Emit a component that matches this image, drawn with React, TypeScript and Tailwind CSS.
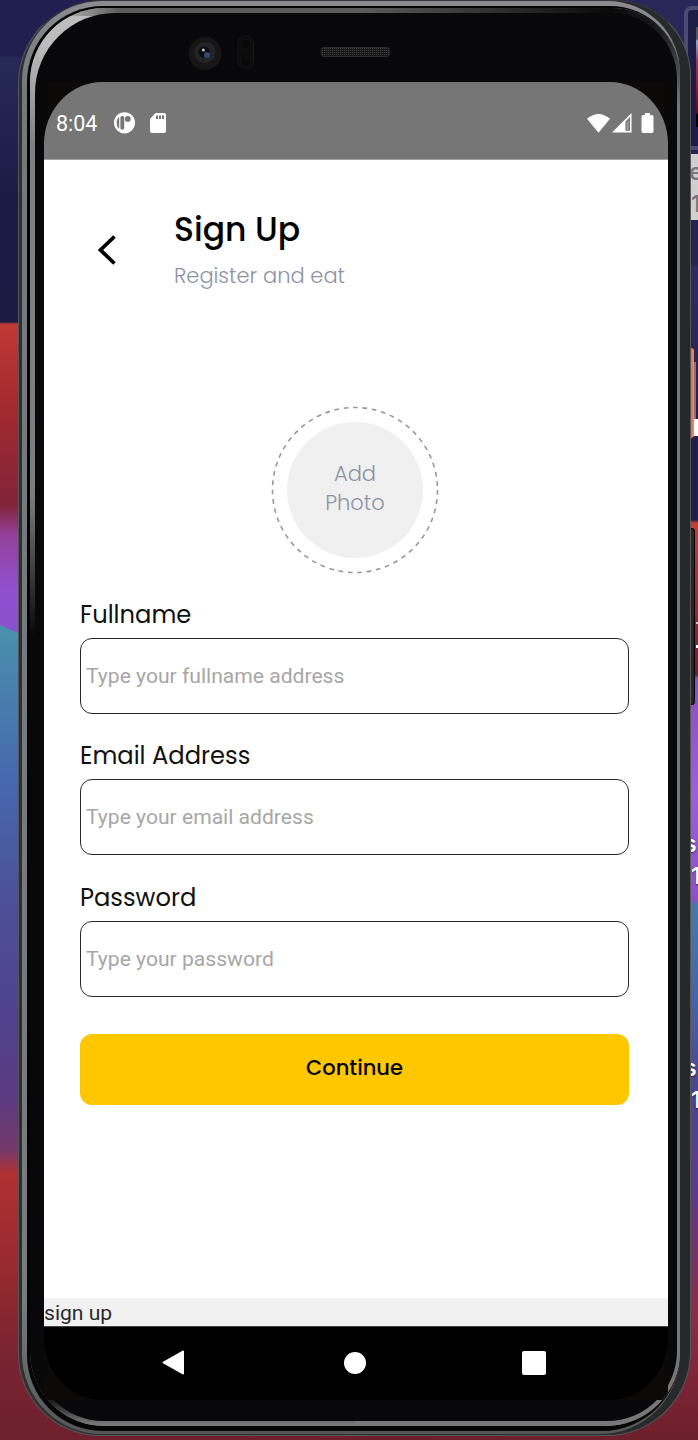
import type { ReactNode } from "react";

const geo = "font-['Poppins','Inter','Liberation_Sans',sans-serif]";

function Wallpaper() {
  return (
    <div aria-hidden="true" className="absolute inset-0 flex">
      <div className="h-full w-1/2 bg-[linear-gradient(180deg,#211f50_0px,#211f50_56px,#272956_58px,#1c1b46_200px,#1c1b44_322px,#c03835_324px,#a52b2e_400px,#812338_505px,#93409a_535px,#9050cf_590px,#8b50cc_628px,#4a8fac_632px,#4668ad_780px,#4c5098_900px,#50418c_1020px,#5c3b80_1100px,#74386a_1150px,#b03132_1174px,#93292f_1280px,#772431_1360px,#6e202d_1440px)]">
        <svg className="mt-[618px]" width="20" height="20" viewBox="0 0 20 20">
          <path d="M0 0H20V16L0 7Z" fill="#8b50cc" />
          <path d="M0 7L20 16V20H0Z" fill="#4a8fac" />
        </svg>
      </div>
      <div className="h-full w-1/2 bg-[linear-gradient(180deg,#27275a_0px,#242450_264px,#2d2c62_268px,#201f4a_440px,#201f4a_520px,#c83c36_523px,#8f2930_620px,#6b1f38_675px,#8750bb_678px,#9a5fdc_790px,#8b50c8_900px,#4679a8_905px,#4763a8_1000px,#4a4590_1090px,#5b3a8c_1190px,#8b2d48_1310px,#7c2434_1380px,#6d1f2b_1440px)]" />
    </div>
  );
}

function DesktopItems() {
  const label = "font-['Inter','Liberation_Sans',sans-serif] text-[23px] leading-[32px] font-semibold";
  return (
    <div aria-hidden="true" className="absolute inset-y-0 right-0 flex w-[14px] flex-col overflow-hidden">
      <div className="mt-[6px] h-[144px] w-[30px] shrink-0 rounded-[8px] border-4 border-[#4b4a72] bg-[#1c1c46] pl-[8px] pt-[17px]">
        <div className="h-[100px] w-[4px] bg-[linear-gradient(180deg,#555_0px,#555_12px,#99a5c8_14px,#8b3b55_34px,#8b1d30_60px,#5b0c14_86px,#000_88px)]" />
      </div>
      <div className={`${label} mt-[4px] h-[66px] shrink-0 bg-[#cfcfcf] pt-[2px] pl-[5px] text-[#77777b]`}>
        <div>e</div>
        <div className="pl-[2px]">1</div>
      </div>
      <div className="mt-[142px] ml-[10px] h-[57px] w-[2px] shrink-0 bg-[#8c706e]" />
      <div className="ml-[10px] h-[17px] w-[4px] shrink-0 bg-white" />
      <div className="mt-[186px] ml-[12px] h-[2px] w-[2px] shrink-0 bg-[#ccc]" />
      <div className="mt-[21px] ml-[12px] h-[3px] w-[2px] shrink-0 bg-white" />
      <div className={`${label} mt-[180px] text-white [text-shadow:0_1px_2px_#0009]`}>
        <div>s</div>
        <div className="pl-[7px]">1</div>
      </div>
      <div className={`${label} mt-[160px] text-white [text-shadow:0_1px_2px_#0009]`}>
        <div>s</div>
        <div className="pl-[7px]">1</div>
      </div>
    </div>
  );
}

function Frame({ children }: { children: ReactNode }) {
  return (
    <div className="relative h-[1436px] w-[673px]">
      <div className="absolute left-[671px] top-[348px] h-[90px] w-[5px] rounded-r-[3px] bg-[linear-gradient(90deg,#cb5a3e,#f08a6c)]" />
      <div className="absolute left-[671px] top-[528px] h-[177px] w-[6px] rounded-r-[3px] border border-black bg-[#242626]" />
      <div className="relative h-full w-full rounded-[84px_76px_84px_82px] border border-[#55575a] border-t-[#38383a] bg-[linear-gradient(90deg,#2e3030,#303232_50%,#262829)] pb-px pl-[3px] pr-[10px]">
        <div className="h-full w-full rounded-[80px_72px_80px_80px] bg-[linear-gradient(180deg,#8b8b91_0px,#74777b_90px,#777b7e_1300px,#555_1434px)] pb-[3px] pl-[5px] pt-[5px]">
          <div className="h-full w-full rounded-[76px_70px_78px_76px] bg-[#050506] pb-[5px] pl-[3px] pt-[2px]">
            <div className="grid h-full w-full overflow-hidden rounded-[74px_68px_74px_74px] bg-[#777]">
              <div className="col-start-1 row-start-1 flex flex-col">
                <div className="h-[8px] bg-[linear-gradient(90deg,#bbb_0px,#999_50px,#5c5c5c_90px,#5c5c5c_330px,#0a0a0a_580px,#222_645px)]" />
                <div className="flex grow">
                  <div className="w-1/2 bg-[linear-gradient(180deg,#bdbdbd_0px,#bdbdbd_26px,#aaa_60px,#808080_130px,#7c7c7c_480px,#080808_620px,#080808_1380px,#777_1408px)]" />
                  <div className="w-1/2 bg-[linear-gradient(180deg,#111_0px,#222_20px,#777_90px,#777_1410px)]" />
                </div>
              </div>
              <div className="col-start-1 row-start-1 pb-[5px] pl-[5px] pr-[3px] pt-[5px]">
                <div className="h-full w-full rounded-[80px_66px_70px_68px] bg-[#08080a] pl-[9px] pr-[9px]">
                  {children}
                </div>
              </div>
            </div>
          </div>
        </div>
      </div>
    </div>
  );
}

function Sensors() {
  return (
    <svg aria-hidden="true" className="block" width="624" height="69" viewBox="44 13 624 69">
      <defs>
        <pattern id="mesh" width="2" height="2" patternUnits="userSpaceOnUse">
          <rect width="2" height="2" fill="#171717" />
          <rect width="1" height="1" fill="#414141" />
        </pattern>
        <radialGradient id="lens">
          <stop offset="0" stopColor="#15161c" />
          <stop offset=".55" stopColor="#20222a" />
          <stop offset="1" stopColor="#252526" />
        </radialGradient>
      </defs>
      <circle cx="205" cy="53.500" r="16.500" fill="#161616" />
      <circle cx="205" cy="52.500" r="10.500" fill="url(#lens)" />
      <circle cx="204" cy="52" r="5.500" fill="#0b0b10" />
      <circle cx="207" cy="55" r="3" fill="#344770" />
      <circle cx="203.300" cy="50" r="1.500" fill="#c4c4c8" />
      <rect x="238" y="36" width="15.500" height="33" rx="7.700" fill="#0c0c0c" stroke="#171717" />
      <circle cx="245.700" cy="44" r="5" fill="#080808" stroke="#141414" />
      <circle cx="245.700" cy="61.500" r="5" fill="#080808" stroke="#141414" />
      <rect x="321" y="47.500" width="68.500" height="9" rx="3" fill="url(#mesh)" stroke="#2c2c2c" />
    </svg>
  );
}

function StatusBar() {
  return (
    <div className="flex h-[78px] shrink-0 items-center border-b border-[#a0a0a0] bg-[#767676] pl-[12px] pr-[14px] pt-[5px] text-white">
      <span className="w-[58px] pt-px font-['Roboto',sans-serif] text-[21.500px] leading-6">8:04</span>
      <svg width="21" height="22" viewBox="0 0 21 22">
        <circle cx="10.500" cy="10.800" r="10.600" fill="#fff" />
        <path d="M4.500 5.200Q5.200 4.500 5.200 6V15.800Q5.200 17 4.500 16.400Q2.600 14.200 2.600 10.800Q2.600 7.400 4.500 5.200Z" fill="#767676" />
        <rect x="6.400" y="4" width="3.800" height="13.500" rx="1.500" fill="#767676" />
        <circle cx="13.800" cy="6.900" r="2.900" fill="#767676" />
      </svg>
      <svg className="ml-[15px]" width="16" height="20" viewBox="0 0 16 20">
        <path d="M5.500 0H14Q16 0 16 2V18Q16 20 14 20H2Q0 20 0 18V6Z" fill="#fff" />
        <path d="M6 2.500H8V6H6ZM9 2.500H11V6H9ZM12 2.500H14V6H12Z" fill="#767676" />
      </svg>
      <span className="grow" />
      <svg width="23" height="19" viewBox="0 0 23 19">
        <path d="M0 4.800Q11.500 -4.600 23 4.800L11.500 18.800Z" fill="#fff" />
      </svg>
      <svg className="ml-[2px]" width="20" height="20" viewBox="0 0 20 20">
        <path d="M0 19.500L19.500 0V19.500Z" fill="#fff" />
        <path d="M13.500 8.500L18 4V17.800H13.500Z" fill="#767676" />
        <path d="M14.800 9.500L16.800 7.500V16.800H14.800Z" fill="#999" />
      </svg>
      <svg className="ml-[9px]" width="13" height="20" viewBox="0 0 13 20">
        <path d="M4 0H9V2H11Q12.500 2 12.500 4V18Q12.500 20 11 20H2Q.5 20 .5 18V4Q.5 2 2 2H4Z" fill="#fff" />
      </svg>
    </div>
  );
}

function Field({ label, placeholder }: { label: string; placeholder: string }) {
  return (
    <label className="flex h-[141.300px] flex-col">
      <span className={`${geo} flex h-[43px] shrink-0 items-center pb-[3px] text-[24.200px] leading-8 whitespace-nowrap text-[#111]`}>{label}</span>
      <input
        placeholder={placeholder}
        className="h-[76px] w-full rounded-[12px] border-[1.500px] border-[#29292b] bg-white px-[5px] pb-px font-['Roboto',sans-serif] text-[21.100px] outline-none placeholder:text-[#a6a6a6] placeholder:opacity-100"
      />
    </label>
  );
}

function NavBar() {
  return (
    <div className="flex h-[74px] shrink-0 items-start border-t border-[#444] bg-black pl-[118px] pt-[23px]">
      <svg width="23" height="25" viewBox="0 0 23 25">
        <path d="M1.500 12.500L21 1.500V23.500Z" fill="#fff" stroke="#fff" strokeWidth="2" strokeLinejoin="round" />
      </svg>
      <span className="ml-[159px] mt-[2px] size-[22px] rounded-full bg-white" />
      <span className="ml-[156px] mt-px size-[24px] rounded-[2px] bg-white" />
    </div>
  );
}

function SignUpScreen() {
  return (
    <div className="h-[1318px] w-[624px] bg-[#0b0a08]">
      <div className="flex h-full w-full flex-col overflow-hidden rounded-[58px/62px]">
        <StatusBar />
        <main className="h-[1138px] shrink-0 bg-white pl-[36px] pr-[39px]">
          <header className="flex h-[178px] pt-[47px]">
            <button className="mt-[26px] ml-[17px] h-[34px] w-[20px]" aria-label="Back">
              <svg width="20" height="34" viewBox="0 0 20 34">
                <path d="M17.500 3.500L3.500 17L17.500 30.500" fill="none" stroke="#000" strokeWidth="3.800" />
              </svg>
            </button>
            <div className={`${geo} ml-[57px]`}>
              <h1 className="text-[33px] leading-[46px] font-medium whitespace-nowrap text-black">Sign Up</h1>
              <p className="mt-[6px] text-[21px] leading-[34px] font-light whitespace-nowrap text-[#8d92a3]">Register and eat</p>
            </div>
          </header>
          <div className="mt-[68px] ml-[191px] grid size-[168px] place-items-center">
            <svg className="col-start-1 row-start-1" width="168" height="168" viewBox="0 0 168 168">
              <circle cx="84" cy="84" r="82.500" fill="none" stroke="#9297a8" strokeWidth="1.600" strokeDasharray="4.710 4.710" />
            </svg>
            <button className={`${geo} col-start-1 row-start-1 size-[136px] rounded-full bg-[#f0f0f0] pb-[4px] text-[21px] leading-[29px] font-light text-[#8d92a3]`}>
              Add
              <br />
              Photo
            </button>
          </div>
          <form className="mt-[21px]">
            <Field label="Fullname" placeholder="Type your fullname address" />
            <Field label="Email Address" placeholder="Type your email address" />
            <Field label="Password" placeholder="Type your password" />
            <button
              type="button"
              className={`${geo} mt-[15px] h-[71px] w-full rounded-[12px] bg-[#ffc700] pb-[3px] text-[21px] font-medium text-[#050505]`}
            >
              Continue
            </button>
          </form>
        </main>
        <div className="flex h-[28px] shrink-0 items-center bg-[#f1f1f1] pt-px font-['Roboto',sans-serif] text-[21.100px] leading-6 text-[#2b2b2b]">sign up</div>
        <NavBar />
      </div>
    </div>
  );
}

export default function App() {
  return (
    <div className="relative h-[1440px] w-[698px] overflow-hidden bg-[#1c1b46] pl-[18px]">
      <Wallpaper />
      <DesktopItems />
      <Frame>
        <Sensors />
        <SignUpScreen />
      </Frame>
    </div>
  );
}
